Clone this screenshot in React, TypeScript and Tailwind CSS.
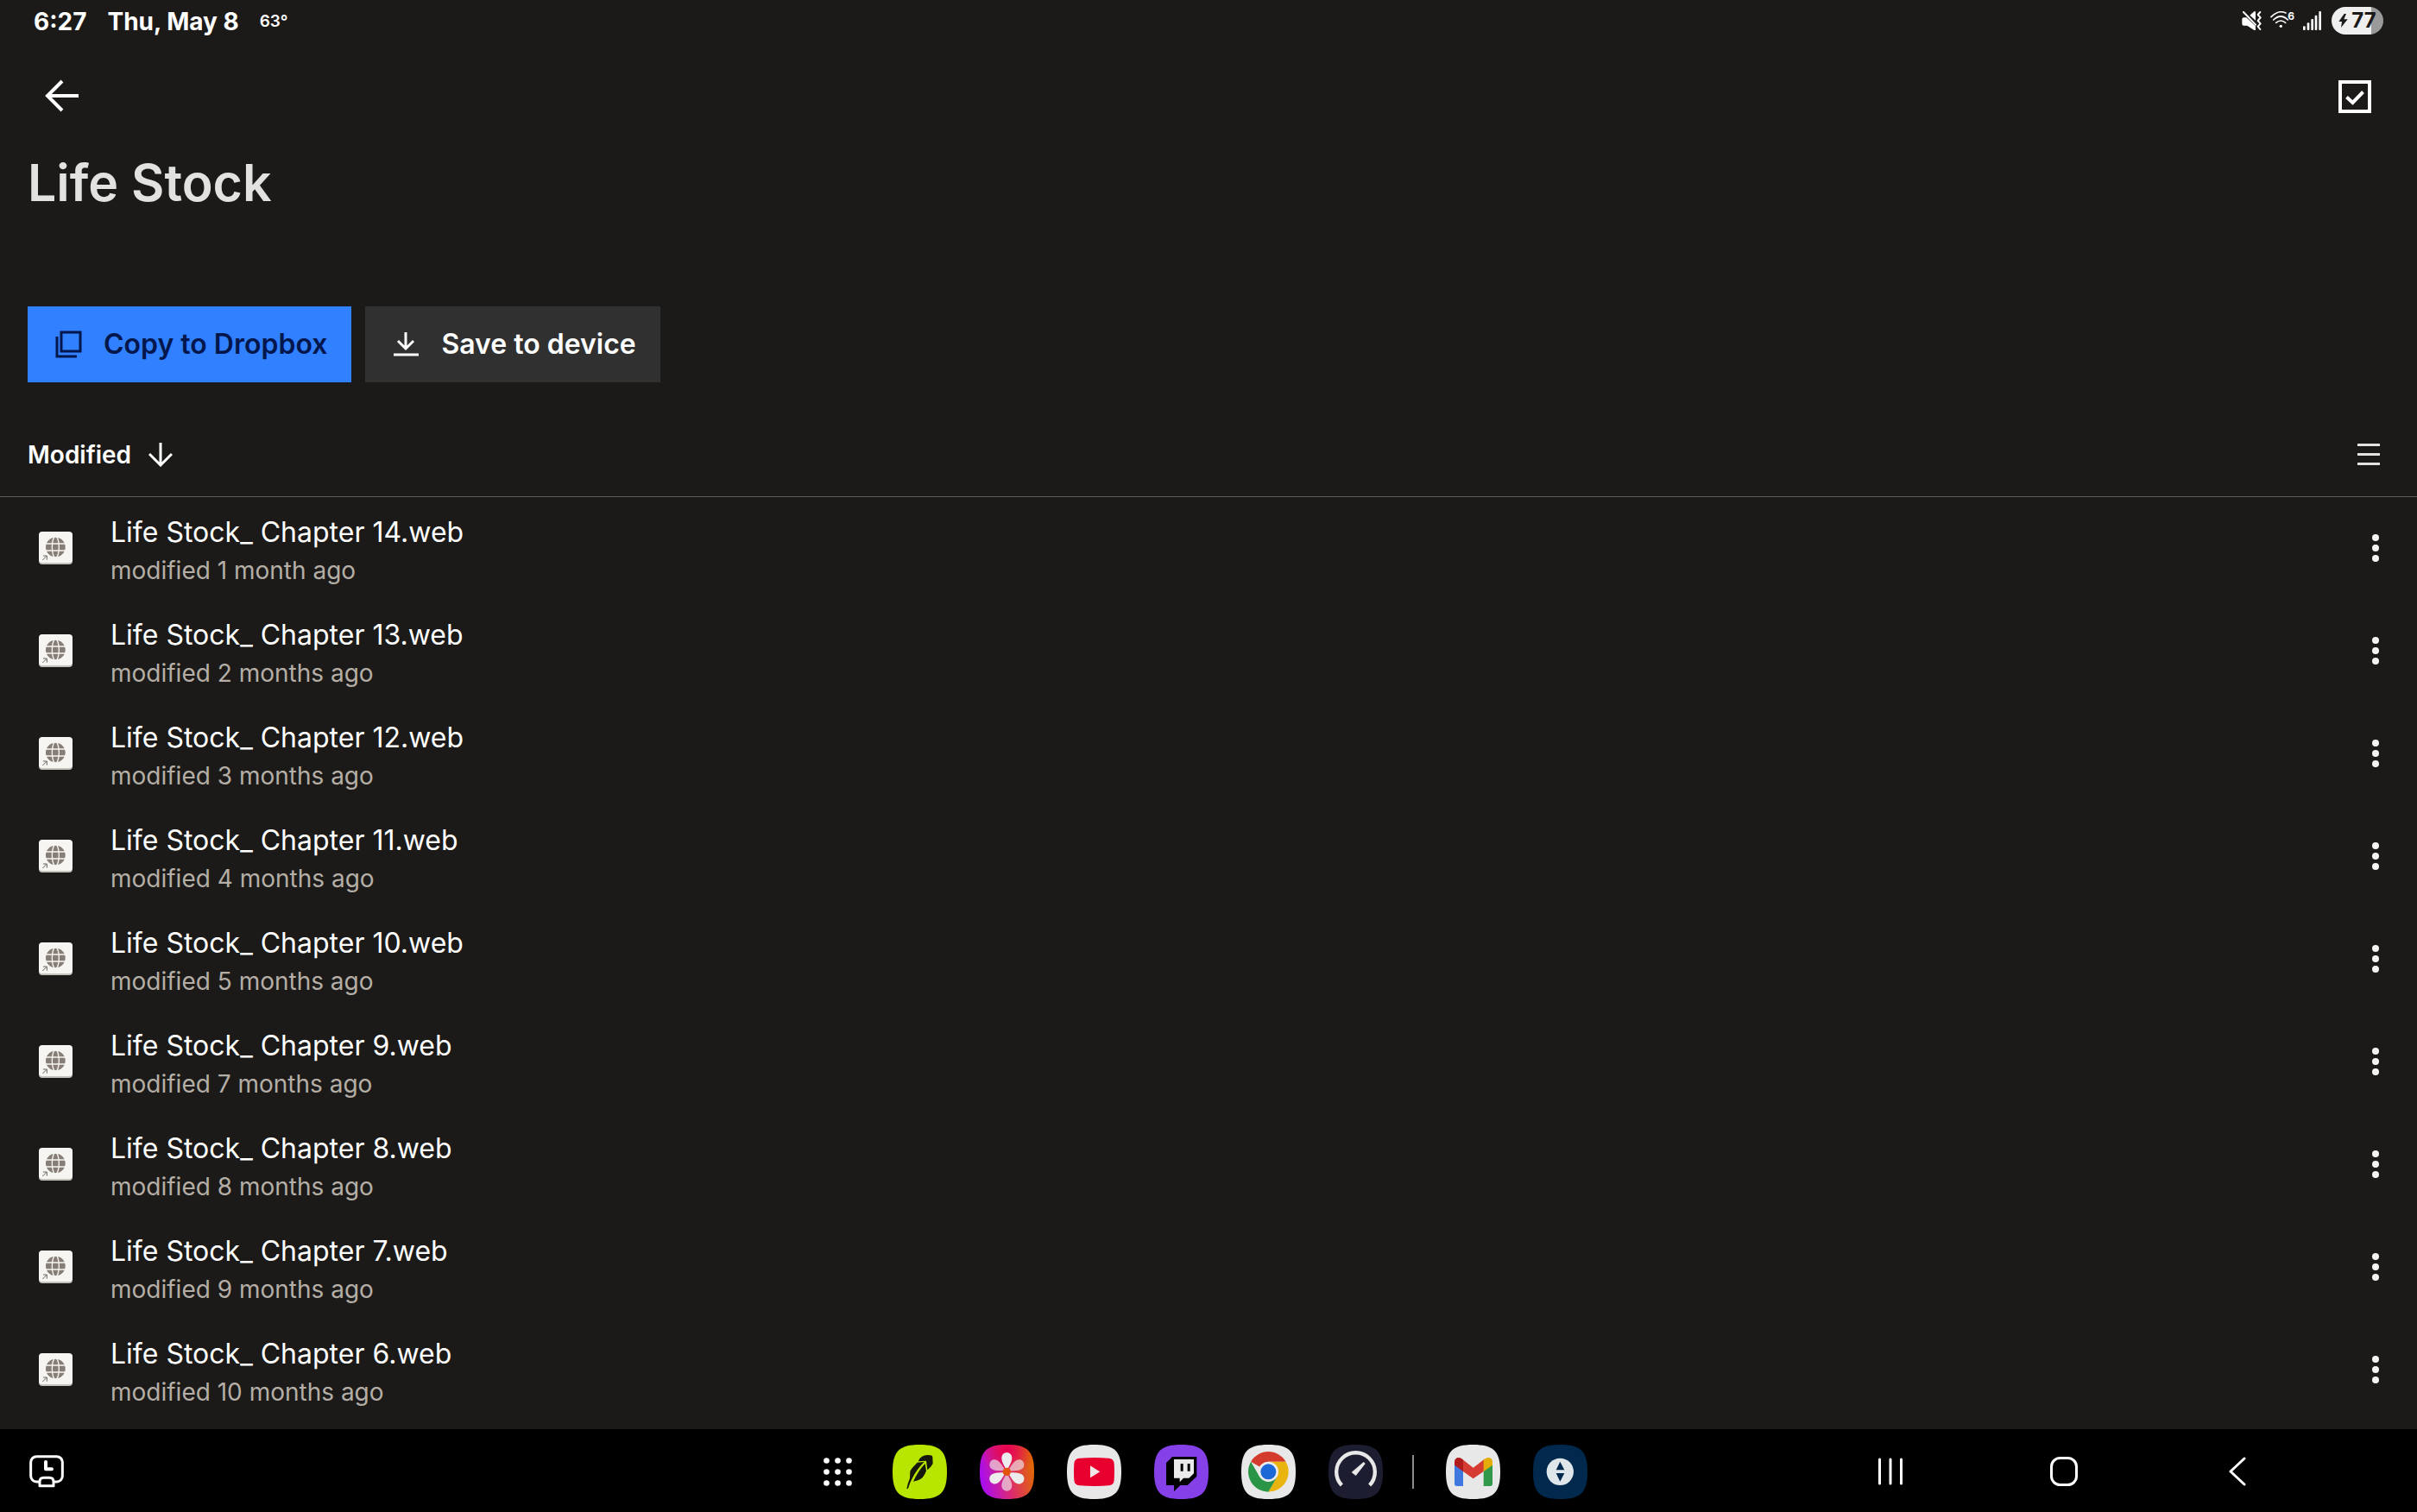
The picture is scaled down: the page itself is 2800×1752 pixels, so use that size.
import type { ReactNode } from 'react';

interface FileItem {
  name: string;
  modified: string;
}

const files: FileItem[] = [
  { name: 'Life Stock_ Chapter 14.web', modified: 'modified 1 month ago' },
  { name: 'Life Stock_ Chapter 13.web', modified: 'modified 2 months ago' },
  { name: 'Life Stock_ Chapter 12.web', modified: 'modified 3 months ago' },
  { name: 'Life Stock_ Chapter 11.web', modified: 'modified 4 months ago' },
  { name: 'Life Stock_ Chapter 10.web', modified: 'modified 5 months ago' },
  { name: 'Life Stock_ Chapter 9.web', modified: 'modified 7 months ago' },
  { name: 'Life Stock_ Chapter 8.web', modified: 'modified 8 months ago' },
  { name: 'Life Stock_ Chapter 7.web', modified: 'modified 9 months ago' },
  { name: 'Life Stock_ Chapter 6.web', modified: 'modified 10 months ago' },
];

/* ---------- status bar ---------- */

function MuteIcon() {
  return (
    <svg viewBox="0 0 69 66" className="h-[22px] w-[23px]" fill="none">
      <path d="M1 28q0-6 6-6h9l32 30v14h-5L19 50H7q-6 0-6-6z" fill="#fff" />
      <path d="M28 14 43 1h5v31z" fill="#fff" />
      <path d="M6 3l42 44" stroke="#fff" strokeWidth="6" strokeLinecap="round" />
      <path d="M64 3l-8 9 9 10-9 11 9 10-9 10 8 10" stroke="#fff" strokeWidth="6" strokeLinecap="round" strokeLinejoin="round" />
    </svg>
  );
}

function WifiIcon() {
  return (
    <span className="relative block h-[22px] w-[28px]">
      <svg viewBox="0 0 84 66" className="h-[22px] w-[28px]" fill="none" stroke="#fff" strokeWidth="5" strokeLinecap="round">
        <path d="M3 20Q28-6 54 6" />
        <path d="M11 30q26-24 50 0" />
        <path d="M20 40q17-14 33 0" />
        <circle cx="37" cy="52" r="5" fill="#fff" stroke="none" />
      </svg>
      <span className="absolute top-0 right-0 text-[12px] leading-3 font-bold">6</span>
    </span>
  );
}

function SignalIcon() {
  return (
    <svg viewBox="0 0 66 66" className="size-[22px]" fill="#fff">
      <rect x="0" y="52" width="8" height="14" rx="3" />
      <rect x="14" y="40" width="8" height="26" rx="3" />
      <rect x="28" y="27" width="8" height="39" rx="3" />
      <rect x="41" y="14" width="8" height="52" rx="3" />
      <rect x="55" y="0" width="8" height="66" rx="3" />
    </svg>
  );
}

function StatusBar() {
  return (
    <div className="flex h-12 items-center justify-between px-[39px] text-white">
      <div className="flex items-center gap-6 pt-0.5">
        <span className="text-[28px] leading-9 font-bold">6:27</span>
        <span className="text-[28px] leading-9 font-bold">Thu, May 8</span>
        <span className="text-[19px] leading-9 font-semibold">63°</span>
      </div>
      <div className="flex items-center">
        <MuteIcon />
        <span className="ml-[10px]">
          <WifiIcon />
        </span>
        <span className="ml-[10px]">
          <SignalIcon />
        </span>
        <span className="ml-[11px] flex h-8 w-[60px] items-center justify-center gap-1 rounded-full bg-linear-to-r from-[#efefef] from-[77%] to-[#9a9a9a] to-[77%] text-[#1b1a18]">
          <svg viewBox="0 0 33 48" className="h-4 w-[11px]" fill="currentColor">
            <path d="M20 0 1 27h11L9 48l23-29H19l8-19z" />
          </svg>
          <span className="text-[24px] leading-8 font-bold">77</span>
        </span>
      </div>
    </div>
  );
}

/* ---------- page icons ---------- */

function BackArrowIcon() {
  return (
    <svg viewBox="0 0 40 40" className="size-10" fill="none" stroke="#fff" strokeWidth="4">
      <path d="M3 19h36M20 2 3 19l17 17" />
    </svg>
  );
}

function SelectIcon() {
  return (
    <svg viewBox="0 0 38 38" className="size-[38px]" fill="none" stroke="#fff" strokeWidth="4">
      <path d="M2 2h34v34H2z" />
      <path d="m9.500 19.500 7 6.500 12-12.500" />
    </svg>
  );
}

function CopyIcon() {
  return (
    <svg viewBox="0 0 32 32" className="size-8" fill="none" stroke="currentColor" strokeWidth="3">
      <path d="M7 2h22v22H7z" />
      <path d="M2 7v23h23" />
    </svg>
  );
}

function DownloadIcon() {
  return (
    <svg viewBox="0 0 32 32" className="size-8" fill="none" stroke="currentColor" strokeWidth="3">
      <path d="M15 2v19M6 12l9 9 9-9M1 28h29" />
    </svg>
  );
}

function SortArrowIcon() {
  return (
    <svg viewBox="0 0 28 28" className="size-7" fill="none" stroke="currentColor" strokeWidth="3">
      <path d="M14 0v26M1 13l13 13 13-13" />
    </svg>
  );
}

function WebFileIcon() {
  return (
    <svg viewBox="0 0 117 114" className="h-[38px] w-[39px]">
      <rect y="3" width="117" height="111" rx="12" fill="#c4c0ba" />
      <rect width="117" height="108" rx="12" fill="#f7f5f2" />
      <circle cx="58" cy="54" r="34" fill="#857d76" />
      <g fill="none" stroke="#f7f5f2" strokeWidth="4">
        <ellipse cx="58" cy="54" rx="12" ry="37" />
        <path d="M22 42h72M22 66h72" />
      </g>
      <path d="M10 76h19v26H10z" fill="#f7f5f2" />
      <path d="m13 99 14-14M15 84h13v14" fill="none" stroke="#6b645e" strokeWidth="3" />
    </svg>
  );
}

/* ---------- app icons ---------- */

function AppIcon({ label, fill, children }: { label: string; fill: string; children: ReactNode }) {
  return (
    <button type="button" aria-label={label}>
      <svg viewBox="0 0 189 189" className="size-[63px]">
        <path
          d="M0 94.500C0 23 23 0 94.500 0S189 23 189 94.500 166 189 94.500 189 0 166 0 94.500Z"
          fill={fill}
        />
        {children}
      </svg>
    </button>
  );
}

const PETAL = 'M94 92C86 72 76 62 76 45a18 18 0 0 1 36 0c0 17-10 27-18 47Z';

function Dock() {
  return (
    <div className="flex items-center gap-[38px] pr-4">
      <button type="button" aria-label="Apps" className="flex h-[63px] w-[51px] items-center justify-center">
        <svg viewBox="0 0 33 33" className="size-[33px]" fill="#fff">
          {[3.5, 16.5, 29.5].map((y) =>
            [3.5, 16.5, 29.5].map((x) => <circle key={`${x}-${y}`} cx={x} cy={y} r="3.300" />),
          )}
        </svg>
      </button>

      <AppIcon label="Robinhood" fill="#b9e600">
        <g fill="#17180c">
          <path d="M90 56Q99 36 121 36q18-1 18 7l1 23q-6 12-19 22l-4-32-27 2z" />
          <path d="M110 60l-24 2Q60 88 61 94l-1 23q-8 18-11 37l5-2q6-20 14-34Q82 88 110 60Z" />
          <path d="M113 66l4 25q-9 27-29 33l-16 4q16-36 41-62Z" />
        </g>
      </AppIcon>

      <AppIcon label="Gallery" fill="url(#gallery-base)">
        <defs>
          <linearGradient id="gallery-base" x1="0" y1="0.6" x2="1" y2="0.4">
            <stop offset="0" stopColor="#a80cf5" />
            <stop offset="0.5" stopColor="#dc2a70" />
            <stop offset="1" stopColor="#e06a00" />
          </linearGradient>
          <radialGradient id="gallery-top" cx="0.5" cy="0.1" r="0.5">
            <stop offset="0" stopColor="#e60050" />
            <stop offset="1" stopColor="#e60050" stopOpacity="0" />
          </radialGradient>
        </defs>
        <path
          d="M0 94.500C0 23 23 0 94.500 0S189 23 189 94.500 166 189 94.500 189 0 166 0 94.500Z"
          fill="url(#gallery-top)"
        />
        {[0, 60, 120, 180, 240, 300].map((angle) => (
          <path
            key={angle}
            d={PETAL}
            fill="#ececec"
            fillOpacity={angle % 120 === 0 ? 1 : 0.65}
            transform={`rotate(${angle} 94 94)`}
          />
        ))}
        <circle cx="94" cy="94" r="14" fill="#e2540c" />
      </AppIcon>

      <AppIcon label="YouTube" fill="#e8e8e8">
        <path
          d="M44 47q50-4 101 0 18 1 19 18 2 29 0 59-1 17-19 18-51 4-101 0-18-1-19-18-2-30 0-59 1-17 19-18Z"
          fill="#e8002f"
        />
        <path d="M81 73l34 21-34 21z" fill="#f0e8e8" />
      </AppIcon>

      <AppIcon label="Twitch" fill="#8540e8">
        <path d="M63 42h85v68l-32 31H91l-22 22v-22H42V63z" fill="#000" />
        <path d="M69 51h69v49l-17 16h-19l-13 14v-14H69z" fill="#ebebeb" />
        <path d="M92 66h9v26h-9zM116 66h9v26h-9z" fill="#000" />
      </AppIcon>

      <AppIcon label="Chrome" fill="#e8e8e8">
        <path d="M94 94 33.400 59A70 70 0 0 1 154.600 59H94z" fill="#d33b2c" />
        <path d="M94 59h60.600A70 70 0 0 1 94 164l30.300-52.500z" fill="#eab40f" />
        <path d="M94 164A70 70 0 0 1 33.400 59l30.300 52.500h60.600z" fill="#2a9447" />
        <circle cx="94" cy="94" r="35" fill="#ececec" />
        <circle cx="94" cy="94" r="27" fill="#1b68d6" />
      </AppIcon>

      <AppIcon label="Speedtest" fill="#1d1d31">
        <path d="M46 141A67 67 0 1 1 143 141" fill="none" stroke="#e8e8e8" strokeWidth="13" />
        <path d="M122 60l6 6-33 42-15-12z" fill="#e8e8e8" />
      </AppIcon>

      <div className="-ml-[3px] flex items-center gap-[38px]">
        <span className="-mx-px h-[39px] w-0.5 bg-[#8c8c8c]" />

        <AppIcon label="Gmail" fill="#e8e8e8">
          <path d="M30 66l30 20v58H38q-8 0-8-8z" fill="#3f79e0" />
          <path d="M131 86l31-20v70q0 8-8 8h-23z" fill="#31994a" />
          <path d="M55 49l40 31 41-31-5 44-36 25-35-25z" fill="#d63c31" />
          <path d="M30 60c0-14 15-19 25-11l5 4v40L30 71z" fill="#b01c1c" />
          <path d="M162 60c0-14-15-19-25-11l-6 4v40l31-22z" fill="#e5ad09" />
        </AppIcon>

        <AppIcon label="Compass" fill="#00294d">
          <circle cx="94" cy="94" r="47" fill="#dfe6ea" />
          <path d="M94 59l15 29H80zM94 128 80 99h29z" fill="#00294d" />
        </AppIcon>
      </div>
    </div>
  );
}

function NavBar() {
  return (
    <nav className="grid h-24 shrink-0 grid-cols-[1fr_auto_1fr] items-center bg-black pt-0.5">
      <button type="button" aria-label="Recent screen" className="ml-[34px] justify-self-start">
        <svg viewBox="0 0 120 114" className="h-[38px] w-10" fill="none" stroke="#fff" strokeWidth="9">
          <rect x="5" y="5" width="110" height="88" rx="20" />
          <path d="M36 107V93q0-14 14-14h20q14 0 14 14v14z" fill="#000" strokeLinejoin="round" />
          <path d="M57 24v25h21" strokeWidth="12" strokeLinecap="round" strokeLinejoin="round" />
        </svg>
      </button>

      <Dock />

      <div className="flex items-center gap-[137px] justify-self-end pr-44">
        <button type="button" aria-label="Recents" className="flex size-16 items-center justify-center">
          <svg viewBox="0 0 28 32" className="h-8 w-7" fill="none" stroke="#fff" strokeWidth="3" strokeLinecap="round">
            <path d="M1.500 2v28M14 2v28M26.500 2v28" />
          </svg>
        </button>
        <button type="button" aria-label="Home" className="flex size-16 items-center justify-center">
          <svg viewBox="0 0 32 34" className="h-[34px] w-8" fill="none" stroke="#fff" strokeWidth="3">
            <rect x="1.500" y="1.500" width="29" height="31" rx="10" />
          </svg>
        </button>
        <button type="button" aria-label="Back" className="flex size-16 items-center justify-center">
          <svg viewBox="0 0 20 34" className="h-[34px] w-5" fill="none" stroke="#fff" strokeWidth="3" strokeLinecap="round" strokeLinejoin="round">
            <path d="M18 2 2 17l16 15" />
          </svg>
        </button>
      </div>
    </nav>
  );
}

function FileRow({ file }: { file: FileItem }) {
  return (
    <li className="flex h-[119px] items-center pr-9 pb-px pl-[45px]">
      <WebFileIcon />
      <div className="ml-11 min-w-0 flex-1 pt-[3px]">
        <p className="truncate text-[32px] leading-[48px] text-white">{file.name}</p>
        <p className="truncate text-[28px] leading-[40px] text-[#b4aea6]">{file.modified}</p>
      </div>
      <button type="button" aria-label={`More options for ${file.name}`} className="flex h-12 w-6 items-center justify-center">
        <svg viewBox="0 0 8 32" className="h-8 w-2" fill="#f7f5f2">
          <circle cx="4" cy="4" r="4" />
          <circle cx="4" cy="16" r="4" />
          <circle cx="4" cy="28" r="4" />
        </svg>
      </button>
    </li>
  );
}

export default function App() {
  return (
    <div className="flex min-h-screen flex-col bg-[#1b1a18] font-['Inter','Liberation_Sans',sans-serif]">
      <StatusBar />

      <main className="flex-1">
        <header className="flex h-32 items-center justify-between pr-[53px] pl-[52px]">
          <button type="button" aria-label="Back">
            <BackArrowIcon />
          </button>
          <button type="button" aria-label="Select files">
            <SelectIcon />
          </button>
        </header>

        <h1 className="px-8 text-[59px] leading-[72px] font-semibold text-[#e2e2e0]">Life Stock</h1>

        <div className="mt-[107px] flex gap-4 px-8">
          <button type="button" className="flex h-[88px] items-center gap-6 bg-[#3080ff] pr-7 pl-8 text-[32px] font-semibold text-[#04174d]">
            <CopyIcon />
            Copy to Dropbox
          </button>
          <button type="button" className="flex h-[88px] items-center gap-6 bg-[#303030] pr-7 pl-8 text-[32px] font-semibold text-white">
            <DownloadIcon />
            Save to device
          </button>
        </div>

        <div className="mt-9 flex h-[97px] items-center justify-between border-b border-[#5e5d5b] px-8">
          <button type="button" className="flex items-center gap-5 text-[28px] font-semibold text-white">
            Modified
            <SortArrowIcon />
          </button>
          <button type="button" aria-label="Change view" className="mr-[11px]">
            <svg viewBox="0 0 26 26" className="size-[26px]" fill="#e4e3e0">
              <path d="M0 0h26v3H0zM0 11h26v3H0zM0 22h26v3H0z" />
            </svg>
          </button>
        </div>

        <ul>
          {files.map((file) => (
            <FileRow key={file.name} file={file} />
          ))}
        </ul>
      </main>

      <NavBar />
    </div>
  );
}
